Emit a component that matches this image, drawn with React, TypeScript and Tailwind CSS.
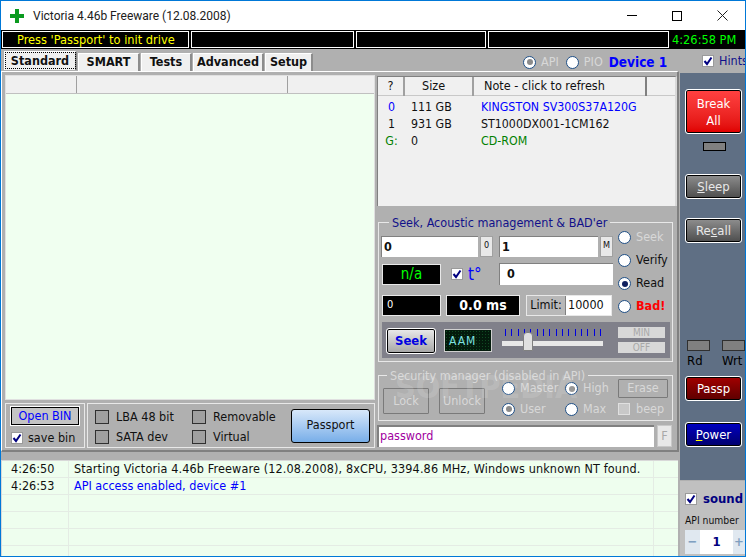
const Radio = ({ label, on, off, className = "" }: { label: string; on?: boolean; off?: boolean; className?: string }) => (
  <div className={`flex items-center gap-[5px] ${className}`}>
    <div className="w-[13px] h-[13px] rounded-full bg-white border border-[#1f4f86] flex items-center justify-center shrink-0">
      {on && <div className={`w-[6px] h-[6px] rounded-full ${off ? "bg-[#8a8a8a]" : "bg-[#10205f]"}`} />}
    </div>
    <span className={off ? "text-[#d8d8d8]" : ""}>{label}</span>
  </div>
)

const Check = ({ on, className = "" }: { on?: boolean; className?: string }) => (
  <div className={`w-[12px] h-[12px] bg-white border border-[#9a9a9a] flex items-center justify-center shrink-0 ${className}`}>
    {on && (
      <svg width="10" height="10" viewBox="0 0 10 10">
        <path d="M1.5 5 L4 8 L8.5 1.5" fill="none" stroke="#000080" strokeWidth="2" />
      </svg>
    )}
  </div>
)

const Flag = ({ label }: { label: string }) => (
  <div className="flex items-center gap-[7px] h-[14px]">
    <div className="w-[14px] h-[14px] bg-[#a0a0a0] border border-[#303030]" />
    <span>{label}</span>
  </div>
)

const Tab = ({ label, w, active }: { label: string; w: string; active?: boolean }) => (
  <div
    className={`${w} flex items-center justify-center font-bold text-[12.5px] bg-[#f0f0f0] border-t border-l border-white border-r-2 border-r-[#8c8c8c] ${
      active ? "h-[19px] mb-[1px] outline-1 outline-dotted outline-black -outline-offset-2" : "h-[18px]"
    }`}
  >
    {label}
  </div>
)

const SideButton = ({ className, children }: { className: string; children: React.ReactNode }) => (
  <div className={`w-[55px] ml-[6px] h-[23px] rounded-[2px] border border-black outline-1 outline-white flex items-center justify-center text-[13px] text-white ${className}`}>
    {children}
  </div>
)

const GhostButton = ({ label, className }: { label: string; className: string }) => (
  <div className={`border border-[#7a7a7a] rounded-[1px] flex items-center justify-center text-[#d8d8d8] ${className}`}>{label}</div>
)

const logGrid = [0, 1, 2, 3, 4, 5]
const ticks = Array.from({ length: 16 }, (_, i) => i)

export default function App() {
  return (
    <div
      className="w-[746px] h-[557px] flex flex-col overflow-hidden bg-white border border-[#0078d7] text-[12.5px] text-[#101010]"
      style={{ fontFamily: '"DejaVu Sans Condensed", "DejaVu Sans", sans-serif' }}
    >
      {/* Title bar */}
      <div className="h-[29px] flex items-center shrink-0">
        <svg className="ml-[9px]" width="14" height="14" viewBox="0 0 14 14">
          <path d="M5 0 H9 V5 H14 V9 H9 V14 H5 V9 H0 V5 H5 Z" fill="#0a9a1f" />
        </svg>
        <span className="ml-[9px] text-[12px] text-[#202020]" style={{ fontFamily: 'Roboto, sans-serif' }}>Victoria 4.46b Freeware (12.08.2008)</span>
        <div className="ml-auto flex items-center mr-[17px] gap-[35px]">
          <div className="w-[10px] h-[1px] bg-black" />
          <div className="w-[10px] h-[10px] border border-black" />
          <svg width="11" height="11" viewBox="0 0 11 11">
            <path d="M0.5 0.5 L10.5 10.5 M10.5 0.5 L0.5 10.5" stroke="#202020" fill="none" />
          </svg>
        </div>
      </div>

      {/* Status bar */}
      <div className="h-[19px] bg-black flex shrink-0 gap-[2px] px-[1px] py-[1px] text-[12.7px]">
        <div className="w-[187px] border border-white flex items-center pl-[14px] text-[#ffff00]">Press 'Passport' to init drive</div>
        <div className="w-[163px] border border-white" />
        <div className="w-[130px] border border-white" />
        <div className="w-[181px] border border-white" />
        <div className="flex-1 flex items-center pl-[1px] text-[#00ff00]">4:26:58 PM</div>
      </div>

      <div className="flex-1 flex min-h-0">
        {/* Left column */}
        <div className="w-[678px] flex flex-col bg-[#b0b0b0]">
          {/* Tabs row */}
          <div className="h-[22px] flex items-end pl-[3px] gap-[1px] shrink-0">
            <Tab label="Standard" w="w-[73px]" active />
            <Tab label="SMART" w="w-[62px]" />
            <Tab label="Tests" w="w-[51px]" />
            <Tab label="Advanced" w="w-[71px]" />
            <Tab label="Setup" w="w-[48px]" />
            <div className="ml-[209px] self-start mt-[3px] flex items-center gap-[7px]">
              <Radio label="API" on off />
              <Radio label="PIO" off />
              <span className="-ml-[1px] text-[#0000ff] font-bold text-[13.5px]">Device 1</span>
            </div>
          </div>

          {/* Tab page */}
          <div className="h-[381px] border-t border-l border-white border-r-2 border-r-[#808080] border-b-2 border-b-[#808080] flex pl-[3px] pt-[3px] gap-[2px] shrink-0">
            <div className="w-[370px] flex flex-col">
              {/* Data grid */}
              <div className="h-[325px] bg-[#f0fff0] border border-[#e0e0e0]">
                <div className="h-[18px] bg-[#f0f0f0] flex border-b border-[#c0c0c0]">
                  <div className="w-[71px] border-r border-[#a0a0a0]" />
                  <div className="w-[211px] border-r border-[#a0a0a0]" />
                </div>
              </div>
              {/* Drive flags */}
              <div className="mt-[3px] flex gap-[2px] h-[45px]">
                <div className="w-[80px] border border-[#e8e8e8] flex flex-col pl-[5px] pt-[3px]">
                  <div className="w-[68px] h-[18px] bg-[#c4c4c4] border border-black outline-1 outline-white text-[#0000ff] flex items-center justify-center">Open BIN</div>
                  <div className="flex items-center gap-[5px] mt-[4px]">
                    <Check on />
                    <span>save bin</span>
                  </div>
                </div>
                <div className="flex-1 border border-[#e8e8e8] flex items-center pl-[7px]">
                  <div className="grid grid-cols-[97px_auto] gap-y-[6px] mt-[3px]">
                    <Flag label="LBA 48 bit" />
                    <Flag label="Removable" />
                    <Flag label="SATA dev" />
                    <Flag label="Virtual" />
                  </div>
                  <div className="ml-auto mr-[4px] w-[79px] h-[34px] rounded-[3px] border border-black bg-gradient-to-b from-[#d8e8fa] to-[#78aee8] flex items-center justify-center">Passport</div>
                </div>
              </div>
            </div>

            {/* Right of the tab page */}
            <div className="w-[300px] flex flex-col relative mt-[1px]">
              <div className="h-[130px] bg-[#f0f0f0] border-t border-l border-[#808080] border-r-2 border-r-[#d8d8d8] shrink-0 pt-[1px]">
                <div className="h-[18px] flex items-center border-b border-[#c8c8c8]">
                  <div className="w-[27px] text-center border-r-2 border-[#a0a0a0]">?</div>
                  <div className="w-[69px] pl-[17px] border-r-2 border-[#a0a0a0]">Size</div>
                  <div className="w-[173px] pl-[10px] border-r-2 border-[#808080]">Note - click to refresh</div>
                </div>
                <div className="grid grid-cols-[27px_76px_auto] leading-[17px] mt-[3px] text-[12.3px]">
                  <div className="text-center text-[#0000ff]">0</div>
                  <div className="pl-[6px]">111 GB</div>
                  <div className="text-[#0000ff]">KINGSTON SV300S37A120G</div>
                  <div className="text-center">1</div>
                  <div className="pl-[6px]">931 GB</div>
                  <div>ST1000DX001-1CM162</div>
                  <div className="text-center text-[#008000]">G:</div>
                  <div className="pl-[6px]">0</div>
                  <div className="text-[#008000]">CD-ROM</div>
                </div>
              </div>

              {/* Seek group */}
              <fieldset className="mt-[9px] ml-[1px] w-[295px] h-[147px] border border-[#e8e8e8] pl-[2px] shrink-0">
                <legend className="ml-[8px] px-[3px] text-[#10108a] leading-[15px]">Seek, Acoustic management &amp; BAD'er</legend>
                <div className="flex h-[81px] mt-[5px]">
                  <div className="w-[232px] flex flex-col">
                    <div className="flex items-center h-[22px]">
                      <div className="w-[97px] h-[21px] bg-white border-t border-l border-[#808080] font-bold pl-[2px] leading-[19px]">0</div>
                      <div className="ml-[2px] w-[13px] h-[21px] bg-[#e8e8e8] text-[9px] flex items-center justify-center border border-[#a0a0a0]">0</div>
                      <div className="ml-[6px] w-[99px] h-[21px] bg-white border-t border-l border-[#808080] font-bold pl-[2px] leading-[19px]">1</div>
                      <div className="ml-[2px] w-[13px] h-[21px] bg-[#e8e8e8] text-[9px] flex items-center justify-center border border-[#a0a0a0]">M</div>
                    </div>
                    <div className="flex items-center h-[22px] mt-[6px]">
                      <div className="ml-[1px] w-[59px] h-[21px] bg-black border border-[#e8e8e8] text-[#00ff00] text-[15px] flex items-center justify-center">n/a</div>
                      <Check on className="ml-[10px]" />
                      <span className="ml-[5px] text-[#0000ff] text-[17px] leading-none">t°</span>
                      <div className="ml-auto w-[114px] h-[22px] bg-white border-t border-l border-[#808080] font-bold pl-[7px] leading-[20px]">0</div>
                    </div>
                    <div className="flex items-center h-[22px] mt-[9px]">
                      <div className="ml-[1px] w-[59px] h-[21px] bg-black border border-[#e8e8e8] text-white text-[11px] flex items-center pl-[4px]">0</div>
                      <div className="ml-[5px] w-[74px] h-[21px] bg-black border border-[#e8e8e8] text-white font-bold text-[14px] flex items-center justify-center">0.0 ms</div>
                      <div className="ml-[6px] w-[86px] h-[21px] bg-white border border-[#e8e8e8] flex items-center">
                        <div className="w-[39px] h-full bg-[#b8b8b8] border-r border-[#808080] flex items-center justify-center">Limit:</div>
                        <span className="pl-[2px]">10000</span>
                      </div>
                    </div>
                  </div>
                  <div className="flex flex-col ml-[5px] -mt-[7px] h-[88px] justify-between">
                    <Radio label="Seek" off />
                    <Radio label="Verify" />
                    <Radio label="Read" on />
                    <Radio label="Bad!" className="font-bold text-[#ff0000]" />
                  </div>
                </div>
                <div className="mt-[6px] ml-[1px] w-[288px] h-[36px] bg-[#80808a] flex items-start pl-[5px]">
                  <div className="mt-[7px] w-[48px] h-[24px] border border-black outline-1 outline-white rounded-[2px] bg-gradient-to-b from-[#e8e8e8] to-[#a8a8a8] text-[#0000e0] font-bold text-[13px] flex items-center justify-center">Seek</div>
                  <div className="mt-[7px] ml-[9px] w-[48px] h-[23px] bg-[#031a0c] border border-[#d0d0d0] text-[#7fe0e0] text-[12px] tracking-[1px] flex items-center pl-[4px] bg-[radial-gradient(#0f4a22_1px,transparent_1px)] bg-[length:3px_3px]">AAM</div>
                  <div className="mt-[7px] ml-[10px] w-[101px] flex flex-col">
                    <div className="ml-[3px] w-[96px] h-[7px] flex justify-between">
                      {ticks.map((i) => (
                        <div key={i} className="w-[1px] h-full bg-[#0000e0]" />
                      ))}
                    </div>
                    <div className="relative h-[5px] mt-[5px] bg-[#e8e8e8]">
                      <div className="absolute left-[21px] -top-[9px] w-[10px] h-[19px] bg-[#e0e0e0] border border-[#808080] rounded-t-[4px]" />
                    </div>
                  </div>
                  <div className="mt-[5px] ml-[15px] flex flex-col gap-[4px] text-[10px] text-[#a8a8a8]">
                    <div className="w-[47px] h-[11px] bg-[#d8d8d8] flex items-center justify-center">MIN</div>
                    <div className="w-[47px] h-[11px] bg-[#d8d8d8] flex items-center justify-center">OFF</div>
                  </div>
                </div>
              </fieldset>

              {/* Security group */}
              <fieldset className="mt-[6px] ml-[1px] w-[295px] h-[53px] border border-[#e8e8e8] flex shrink-0 text-[#d8d8d8]">
                <legend className="ml-[8px] px-[3px] leading-[15px]">Security manager (disabled in API)</legend>
                <div className="flex items-start -mt-[4px] pl-[4px]">
                  <GhostButton label="Lock" className="w-[46px] h-[26px] mt-[9px]" />
                  <GhostButton label="Unlock" className="w-[46px] h-[26px] mt-[9px] ml-[10px]" />
                  <div className="ml-[17px] grid grid-cols-[63px_53px_auto] gap-y-[2px] items-center">
                    <Radio label="Master" off />
                    <Radio label="High" on off />
                    <GhostButton label="Erase" className="w-[50px] h-[19px]" />
                    <Radio label="User" on off />
                    <Radio label="Max" off />
                    <div className="flex items-center gap-[6px]">
                      <div className="w-[12px] h-[12px] bg-[#c8c8c8] border border-[#e0e0e0]" />
                      <span>beep</span>
                    </div>
                  </div>
                </div>
              </fieldset>

              <div className="mt-[4px] flex shrink-0">
                <div className="w-[277px] h-[22px] bg-white border-t-2 border-l-2 border-[#808080] text-[#a000a0] pl-[1px] leading-[18px]">password</div>
                <div className="ml-[3px] w-[15px] h-[22px] bg-[#e8e8e8] text-[#a8a8a8] flex items-center justify-center border border-[#c8c8c8]">F</div>
              </div>

              {/* Watermark */}
              <div className="absolute left-[18px] top-[295px] text-[32px] font-bold text-white/15 pointer-events-none leading-none">SOFTPEDIA</div>
            </div>
          </div>

          {/* Log */}
          <div className="mt-[8px] mr-[1px] flex-1 border-t border-l border-[#d8d8d8] bg-[#eefeee] relative overflow-hidden">
            {logGrid.map((i) => (
              <div key={i} className="h-[17px] border-b border-[#e4ece4] flex items-center">
                <div className="w-[67px] h-full border-r border-[#e4ece4] pl-[9px] flex items-center">
                  {i === 0 ? "4:26:50" : i === 1 ? "4:26:53" : ""}
                </div>
                <div className={`pl-[5px] ${i === 1 ? "text-[#0000ff]" : "tracking-[0.14px]"}`}>
                  {i === 0 && "Starting Victoria 4.46b Freeware (12.08.2008), 8xCPU, 3394.86 MHz, Windows unknown NT found."}
                  {i === 1 && "API access enabled, device #1"}
                </div>
              </div>
            ))}
            <div className="absolute left-[651px] top-0 bottom-0 w-[1px] bg-[#e4ece4]" />
          </div>
        </div>

        {/* Right column */}
        <div className="flex-1 flex flex-col bg-[#b0b0b0]">
          <div className="h-[24px] flex items-center pl-[23px] gap-[5px] shrink-0">
            <Check on />
            <span className="text-[#10108a] whitespace-nowrap">Hints</span>
          </div>
          <div className="h-[407px] ml-[1px] bg-[#5f6f84] flex flex-col shrink-0">
            <SideButton className="mt-[17px] !h-[43px] text-center leading-[17px] bg-gradient-to-b from-[#ff4040] to-[#e00000]">
              Break<br />All
            </SideButton>
            <div className="mt-[9px] ml-[23px] w-[23px] h-[9px] bg-[#808080] border border-black" />
            <SideButton className="mt-[24px] bg-gradient-to-b from-[#8c8c8c] to-[#505050] !text-[#e8e8e8]">
              <span><u>S</u>leep</span>
            </SideButton>
            <SideButton className="mt-[21px] bg-gradient-to-b from-[#8c8c8c] to-[#505050] !text-[#e8e8e8]">
              <span>Re<u>c</u>all</span>
            </SideButton>
            <div className="mt-[98px] ml-[7px] flex gap-[12px]">
              <div className="w-[23px] h-[11px] bg-[#808080] border border-[#303030]" />
              <div className="w-[23px] h-[11px] bg-[#808080] border border-[#303030]" />
            </div>
            <div className="ml-[7px] flex gap-[12px] text-[13px] leading-[15px] mt-[2px]">
              <span className="w-[23px] text-black">Rd</span>
              <span className="text-black">Wrt</span>
            </div>
            <SideButton className="mt-[9px] bg-gradient-to-b from-[#a00000] to-[#600000]">Passp</SideButton>
            <SideButton className="mt-[23px] bg-gradient-to-b from-[#0000c0] to-[#000070]">
              <span><u className="decoration-[#ffff00]">P</u>ower</span>
            </SideButton>
          </div>
          <div className="flex-1 mt-[1px] ml-[1px] pl-[5px] pt-[8px] bg-[#c0c0c0]">
            <div className="flex items-center gap-[6px]">
              <Check on />
              <span className="font-bold text-[13px] text-[#000080]">sound</span>
            </div>
            <div className="text-[10.3px] mt-[5px] leading-[13px] whitespace-nowrap">API number</div>
            <div className="flex mt-[3px] h-[24px] w-[60px] bg-white font-bold text-[#000080] text-[13px]">
              <div className="w-[15px] bg-[#e0e8f0] flex items-center justify-center text-[#7f9fc0]">−</div>
              <div className="w-[33px] flex items-center justify-center">1</div>
              <div className="w-[12px] bg-[#e0e8f0] flex items-center justify-center text-[#7f9fc0]">+</div>
            </div>
          </div>
        </div>
      </div>
    </div>
  )
}
